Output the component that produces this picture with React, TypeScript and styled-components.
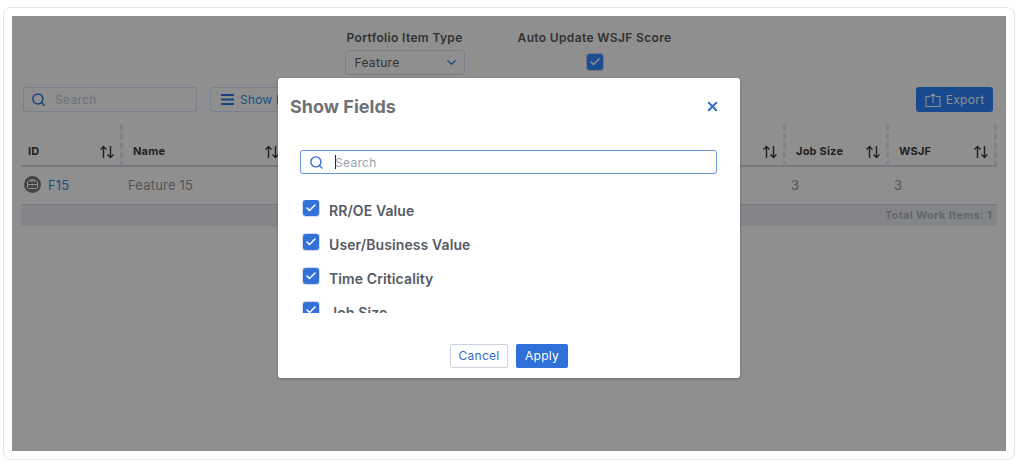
import styled, { createGlobalStyle } from 'styled-components'
import { Search, X, Check, ChevronDown } from 'lucide-react'

const columns = [
  { title: 'ID', width: 102 },
  { title: 'Name', width: 165 },
  { title: 'RR/OE Value', width: 166 },
  { title: 'User/Business Value', width: 166 },
  { title: 'Time Criticality', width: 166 },
  { title: 'Job Size', width: 103 },
  { title: 'WSJF', width: 108 },
]

const fields = ['RR/OE Value', 'User/Business Value', 'Time Criticality', 'Job Size']

const GlobalStyle = createGlobalStyle`
  html, body {
    margin: 0;
    background: #fff;
  }
  body {
    font-family: Inter, "Liberation Sans", sans-serif;
  }
`

const SortIcon = () => (
  <svg width="16" height="14" viewBox="0 0 16 14" fill="none" stroke="#3a3a3a" strokeWidth="1.4">
    <path d="M4.5 13V1.5M1.5 4.5l3-3 3 3M11.5 1v11.5M8.5 9.5l3 3 3-3" />
  </svg>
)

const BriefcaseIcon = () => (
  <svg width="17" height="17" viewBox="0 0 17 17">
    <circle cx="8.5" cy="8.5" r="8.5" fill="#7a7a7a" />
    <rect x="3.5" y="5" width="10" height="7.5" rx="1.2" fill="none" stroke="#fff" strokeWidth="1" />
    <path d="M6.5 5V3.8h4V5M3.5 8.5h10" fill="none" stroke="#fff" strokeWidth="1" />
    <rect x="7.5" y="7.8" width="2" height="1.6" fill="#fff" />
  </svg>
)

const ExportIcon = () => (
  <svg width="16" height="14" viewBox="0 0 16 14" fill="none" stroke="#fff" strokeWidth="1.1">
    <path d="M5 3.5H1v10h14v-10h-4M8 10V1M5.5 3.3 8 1l2.5 2.3" />
  </svg>
)

const MenuIcon = () => (
  <svg width="13" height="11" viewBox="0 0 13 11" fill="#2f78e0">
    <rect width="13" height="2" y="0" />
    <rect width="13" height="2" y="4.5" />
    <rect width="13" height="2" y="9" />
  </svg>
)

const App = () => {
  return (
    <>
      <GlobalStyle />
      <Card>
        <Panel>
          <Filters>
            <Filter>
              <FilterLabel>Portfolio Item Type</FilterLabel>
              <Select>
                Feature
                <ChevronDown size={15} strokeWidth={2.2} color="#2f78e0" />
              </Select>
            </Filter>
            <Filter>
              <FilterLabel>Auto Update WSJF Score</FilterLabel>
              <CheckBox $muted>
                <Check size={12} strokeWidth={3} color="#fff" />
              </CheckBox>
            </Filter>
          </Filters>
          <Toolbar>
            <SearchBox>
              <Search size={15} strokeWidth={2.4} color="#2f78e0" />
              Search
            </SearchBox>
            <ShowButton>
              <MenuIcon />
              Show Fields
            </ShowButton>
            <ExportButton>
              <ExportIcon />
              Export
            </ExportButton>
          </Toolbar>
          <Table>
            <HeadRow>
              {columns.map(column => (
                <HeadCell key={column.title} $width={column.width}>
                  <span>{column.title}</span>
                  <SortIcon />
                </HeadCell>
              ))}
            </HeadRow>
            <BodyRow>
              <BodyCell $width={102}>
                <BriefcaseIcon />
                <IdLink>F15</IdLink>
              </BodyCell>
              <BodyCell $width={165}>Feature 15</BodyCell>
              <BodyCell $width={166}>3</BodyCell>
              <BodyCell $width={166}>3</BodyCell>
              <BodyCell $width={166}>3</BodyCell>
              <BodyCell $width={103}>3</BodyCell>
              <BodyCell $width={108}>3</BodyCell>
            </BodyRow>
            <TableFooter>Total Work Items: 1</TableFooter>
          </Table>
          <Overlay>
            <Modal>
              <ModalHeader>
                <ModalTitle>Show Fields</ModalTitle>
                <X size={15} strokeWidth={3} color="#2f6bcf" />
              </ModalHeader>
              <ModalSearch>
                <Search size={15} strokeWidth={2.2} color="#2f6bcf" />
                <Caret />
                <span>Search</span>
              </ModalSearch>
              <FieldList>
                {fields.map(field => (
                  <FieldRow key={field}>
                    <CheckBox>
                      <Check size={12} strokeWidth={3} color="#fff" />
                    </CheckBox>
                    <FieldName>{field}</FieldName>
                  </FieldRow>
                ))}
              </FieldList>
              <ModalFooter>
                <CancelButton>Cancel</CancelButton>
                <ApplyButton>Apply</ApplyButton>
              </ModalFooter>
            </Modal>
          </Overlay>
        </Panel>
      </Card>
    </>
  )
}

const Card = styled.div`
  box-sizing: border-box;
  width: 1012px;
  height: 453px;
  margin: 7px 0 0 3px;
  padding: 8px 8px 7px;
  background: #fff;
  border: 1px solid #e6e6e6;
  border-radius: 8px;
`
const Panel = styled.div`
  position: relative;
  height: 435px;
  padding: 14px 9px 0;
  box-sizing: border-box;
  background: #fff;
  overflow: hidden;
`
const Filters = styled.div`
  display: flex;
  justify-content: center;
  gap: 53px;
  height: 57px;
  padding-right: 2px;
`
const Filter = styled.div`
  display: flex;
  flex-direction: column;
  align-items: center;
  gap: 5px;
`
const FilterLabel = styled.div`
  font-size: 12px;
  line-height: 15px;
  font-weight: 600;
  letter-spacing: 0.35px;
  color: #5a5a5a;
`
const Select = styled.div`
  box-sizing: border-box;
  display: flex;
  align-items: center;
  justify-content: space-between;
  width: 120px;
  height: 25px;
  padding: 0 5px 0 9px;
  border: 1px solid #d5e0f5;
  border-radius: 4px;
  font-size: 12px;
  letter-spacing: 0.3px;
  color: #5a5a5a;
`
const CheckBox = styled.div<{ $muted?: boolean }>`
  box-sizing: border-box;
  flex: none;
  display: flex;
  align-items: center;
  justify-content: center;
  width: 16px;
  height: 16px;
  margin-top: ${p => (p.$muted ? '4px' : '0')};
  border-radius: 3px;
  background: ${p => (p.$muted ? '#3589ff' : '#3370d8')};
  box-shadow: 0 0 0 1px ${p => (p.$muted ? '#c0d2f0' : '#cfdcf3')};
`
const Toolbar = styled.div`
  display: flex;
  align-items: center;
  height: 25px;
  padding: 0 4px 0 2px;
`
const SearchBox = styled.div`
  box-sizing: border-box;
  display: flex;
  align-items: center;
  gap: 9px;
  width: 174px;
  height: 25px;
  padding-left: 7px;
  border: 1px solid #d5e4ff;
  border-radius: 3px;
  font-size: 12px;
  letter-spacing: 0.3px;
  color: #bcc8e0;
`
const ShowButton = styled.div`
  box-sizing: border-box;
  display: flex;
  align-items: center;
  gap: 6px;
  width: 120px;
  height: 25px;
  margin-left: 13px;
  padding-left: 10px;
  border: 1px solid #d5e4ff;
  border-radius: 3px;
  font-size: 12px;
  letter-spacing: 0.2px;
  color: #3590e8;
`
const ExportButton = styled.div`
  box-sizing: border-box;
  display: flex;
  align-items: center;
  justify-content: center;
  gap: 5px;
  width: 77px;
  height: 25px;
  margin-left: auto;
  border-radius: 3px;
  background: #2e84ff;
  font-size: 12px;
  letter-spacing: 0.3px;
  color: #fff;
`
const Table = styled.div`
  margin-top: 12px;
  width: 976px;
`
const HeadRow = styled.div`
  display: flex;
  height: 43px;
`
const HeadCell = styled.div<{ $width: number }>`
  box-sizing: border-box;
  display: flex;
  align-items: flex-end;
  justify-content: space-between;
  width: ${p => p.$width}px;
  padding: 0 5px 6px 10px;
  border-bottom: 2px solid #d2d6e0;
  border-right: 3px dashed #e3e6f0;
  font-size: 11px;
  line-height: 15px;
  font-weight: 700;
  letter-spacing: 0.2px;
  color: #3c3c3c;
  white-space: nowrap;
  &:first-child {
    padding-left: 7px;
  }
`
const BodyRow = styled.div`
  display: flex;
  height: 38px;
  padding-bottom: 2px;
  border-bottom: 1px solid #d2d6e0;
  box-sizing: border-box;
`
const BodyCell = styled.div<{ $width: number }>`
  box-sizing: border-box;
  display: flex;
  align-items: center;
  gap: 7px;
  width: ${p => p.$width}px;
  padding-left: 5px;
  font-size: 13px;
  letter-spacing: 0.2px;
  color: #999;
  &:first-child {
    padding-left: 3px;
  }
`
const IdLink = styled.span`
  color: #3590e8;
`
const TableFooter = styled.div`
  height: 21px;
  padding-right: 5px;
  background: #ebeef3;
  text-align: right;
  font-size: 11px;
  line-height: 20px;
  font-weight: 700;
  letter-spacing: 0.3px;
  color: #afb6c0;
`
const Overlay = styled.div`
  position: absolute;
  inset: 0;
  display: flex;
  justify-content: center;
  align-items: flex-start;
  padding-top: 62px;
  background: rgba(0, 0, 0, 0.44);
`
const Modal = styled.div`
  display: flex;
  flex-direction: column;
  width: 462px;
  height: 300px;
  background: #fff;
  border-radius: 3px;
  box-shadow: 0 1px 3px rgba(0, 0, 0, 0.25);
`
const ModalHeader = styled.div`
  display: flex;
  align-items: center;
  justify-content: space-between;
  height: 56px;
  padding: 0 20px 0 12px;
  box-sizing: border-box;
`
const ModalTitle = styled.div`
  font-size: 18px;
  font-weight: 700;
  color: #6e7178;
`
const ModalSearch = styled.div`
  box-sizing: border-box;
  display: flex;
  align-items: center;
  width: 417px;
  height: 24px;
  margin: 16px 0 0 22px;
  padding-left: 8px;
  border: 1px solid #6f9bdc;
  border-radius: 3px;
  box-shadow: 0 0 1px #9dbcea;
  font-size: 12px;
  letter-spacing: 0.3px;
  color: #9aa3b0;
`
const Caret = styled.i`
  width: 1px;
  height: 14px;
  margin-left: 11px;
  margin-right: -1px;
  background: #222;
`
const FieldList = styled.div`
  display: flex;
  flex-direction: column;
  gap: 18px;
  height: 113px;
  margin-top: 26px;
  padding: 0 0 0 25px;
  overflow: hidden;
`
const FieldRow = styled.div`
  flex: none;
  display: flex;
  align-items: flex-start;
  gap: 10px;
  height: 16px;
`
const FieldName = styled.span`
  margin-top: 2px;
  font-size: 14px;
  line-height: 17px;
  font-weight: 600;
  letter-spacing: 0.1px;
  color: #555a66;
`
const ModalFooter = styled.div`
  display: flex;
  justify-content: center;
  gap: 8px;
  margin-top: 31px;
`
const CancelButton = styled.div`
  box-sizing: border-box;
  width: 58px;
  height: 24px;
  border: 1px solid #cdd3de;
  border-radius: 2px;
  text-align: center;
  font-size: 12px;
  line-height: 22px;
  letter-spacing: 0.3px;
  color: #2f6bcf;
`
const ApplyButton = styled.div`
  width: 52px;
  height: 24px;
  border-radius: 2px;
  background: #2f6fd8;
  text-align: center;
  font-size: 12px;
  line-height: 24px;
  letter-spacing: 0.3px;
  color: #fff;
`

export default App
